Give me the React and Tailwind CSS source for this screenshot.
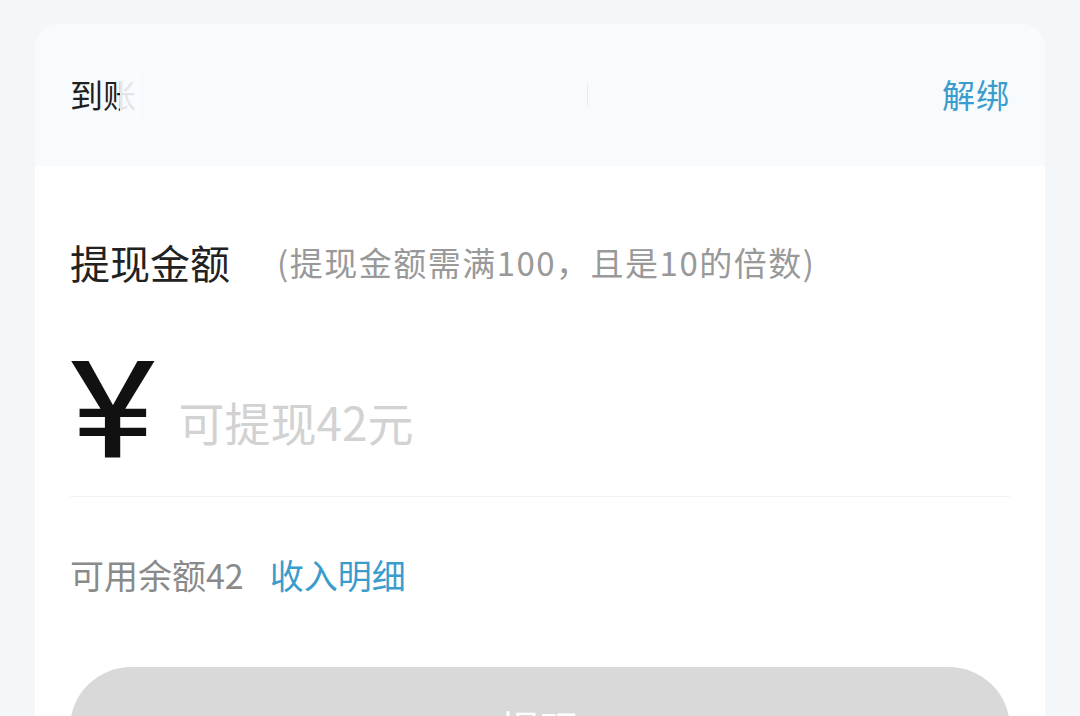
import React, { useState } from 'react';

function App() {
  const [amount, setAmount] = useState('');

  return (
    <div
      className="min-h-[716px] bg-[#f3f7fa] pt-[24px] px-[35px] overflow-hidden"
      style={{ fontFamily: '"Noto Sans CJK SC", "Noto Sans", Roboto, sans-serif' }}
    >
      <div className="bg-white rounded-[24px] overflow-hidden">
        {/* account row (masked) */}
        <div className="h-[142px] bg-[#f8fbfe] flex items-center justify-between px-[35px]">
          <div className="flex items-center">
            <span className="relative text-[33px] text-[#1f1f1f] whitespace-nowrap">
              到账
              <span className="absolute top-0 bottom-0 left-[50px] w-[20px] bg-[#f8fbfe]/90" />
            </span>
            <span className="ml-[451px] w-px h-[24px] bg-[#e6ebef]" />
          </div>
          <button className="text-[33px] text-[#3a9ccc] tracking-[1px]">解绑</button>
        </div>

        <div className="px-[35px]">
          <div className="flex items-center pt-[68px]">
            <h2 className="text-[40px] text-[#222] leading-[56px]">提现金额</h2>
            <span className="ml-[47px] text-[33px] tracking-[1.5px] text-[#999] leading-[56px]">
              (提现金额需满100，且是10的倍数)
            </span>
          </div>

          <div className="flex items-center mt-[50px] h-[157px] border-b border-[#f1f3f5]">
            <span
              className="text-[136px] leading-none text-[#111] -mt-[14px] scale-x-[1.2] origin-left"
              style={{ fontFamily: 'Roboto, "Noto Sans", sans-serif' }}
            >
              ¥
            </span>
            <input
              value={amount}
              onChange={(e) => setAmount(e.target.value)}
              placeholder="可提现42元"
              className="ml-[37px] mt-[6px] flex-1 bg-transparent outline-none text-[46px] text-[#222] placeholder:text-[#d2d2d2]"
            />
          </div>

          <div className="flex items-center mt-[54px] text-[34px] leading-[48px]">
            <span className="text-[#8a8a8a]">可用余额42</span>
            <span className="ml-[26px] text-[#3a9ccc]">收入明细</span>
          </div>

          <button className="mt-[68px] mb-[40px] w-full h-[122px] rounded-full bg-[#d9d9d9] text-white text-[40px]">
            提现
          </button>
        </div>
      </div>
    </div>
  );
}

export default App;
